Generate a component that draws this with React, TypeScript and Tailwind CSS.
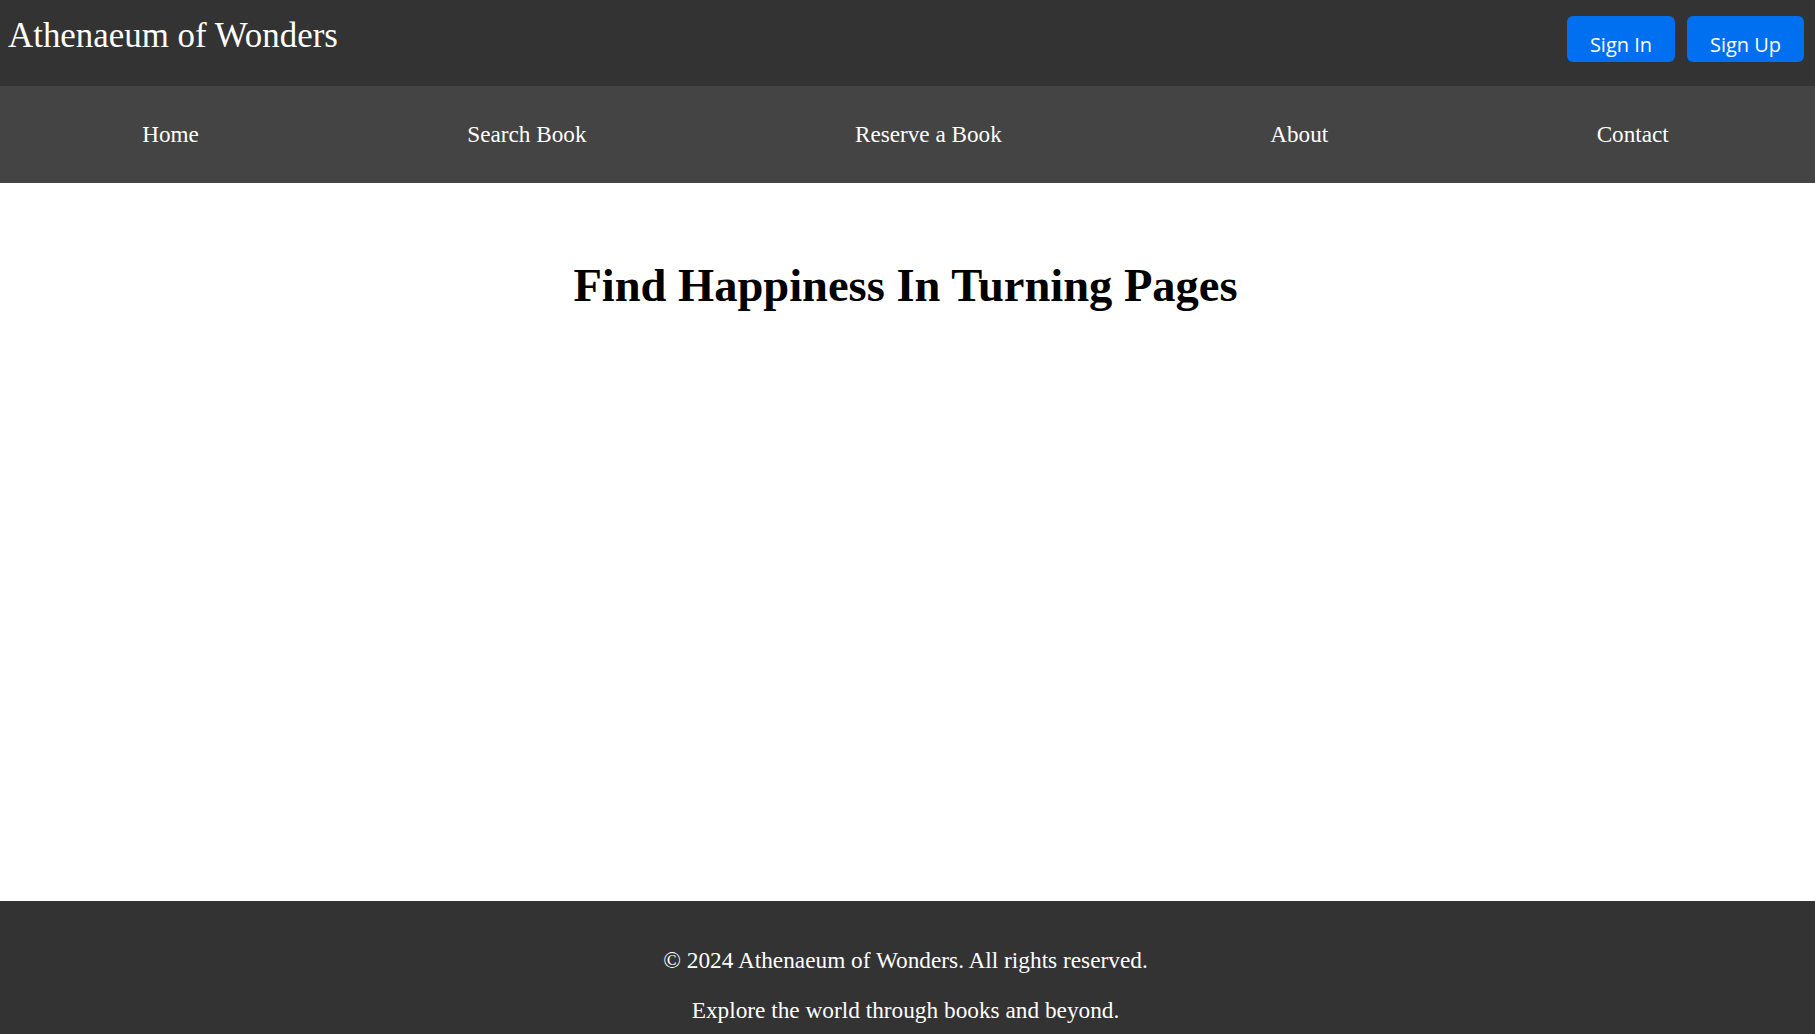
export default function App() {
  const links = ["Home", "Search Book", "Reserve a Book", "About", "Contact"];

  return (
    <div className="min-h-screen bg-white font-['Liberation_Serif','Times_New_Roman',serif]">
      {/* top bar */}
      <header className="h-[86px] bg-[#333333] flex justify-between">
        <h1 className="pl-2 pt-[16px] text-[34.9px] leading-[40px] font-normal text-white">
          Athenaeum of Wonders
        </h1>
        <div className="flex gap-3 pt-[16px] pr-[11px]">
          <button className="w-[108px] h-[46px] rounded-[6px] bg-[#006ff0] text-white text-[20px] leading-[27px] pt-[15px] self-start flex justify-center font-['Open_Sans','Noto_Sans',sans-serif]">
            Sign In
          </button>
          <button className="w-[117px] h-[46px] rounded-[6px] bg-[#006ff0] text-white text-[20px] leading-[27px] pt-[15px] self-start flex justify-center font-['Open_Sans','Noto_Sans',sans-serif]">
            Sign Up
          </button>
        </div>
      </header>

      {/* nav */}
      <nav className="h-[97px] bg-[#444444] flex items-center justify-around pl-[8px] pr-[12px] pb-[2px]">
        {links.map((l) => (
          <a key={l} href="#" className="text-white text-[23.2px] leading-[28px]">
            {l}
          </a>
        ))}
      </nav>

      {/* main */}
      <main className="h-[718px] pt-[76px] pr-[4px]">
        <h2 className="text-center text-black font-bold text-[46.5px] leading-[54px]">
          Find Happiness In Turning Pages
        </h2>
      </main>

      {/* footer */}
      <footer className="bg-[#333333] text-white text-center pt-[45px] pb-[10px] pr-[4px] text-[23.3px] leading-[28px]">
        <p>© 2024 Athenaeum of Wonders. All rights reserved.</p>
        <p className="mt-[22px]">Explore the world through books and beyond.</p>
      </footer>
    </div>
  );
}
